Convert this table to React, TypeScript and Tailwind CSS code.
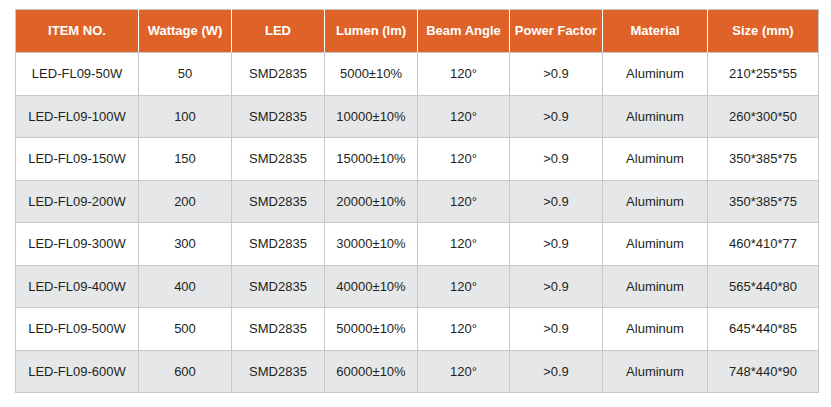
import React from 'react';

const headers = ['ITEM NO.', 'Wattage (W)', 'LED', 'Lumen (lm)', 'Beam Angle', 'Power Factor', 'Material', 'Size (mm)'];
const widths = ['w-[123px]', 'w-[93px]', 'w-[93px]', 'w-[93px]', 'w-[92px]', 'w-[93px]', 'w-[105px]', 'w-[111px]'];

const rows = [
  ['LED-FL09-50W', '50', 'SMD2835', '5000±10%', '120°', '>0.9', 'Aluminum', '210*255*55'],
  ['LED-FL09-100W', '100', 'SMD2835', '10000±10%', '120°', '>0.9', 'Aluminum', '260*300*50'],
  ['LED-FL09-150W', '150', 'SMD2835', '15000±10%', '120°', '>0.9', 'Aluminum', '350*385*75'],
  ['LED-FL09-200W', '200', 'SMD2835', '20000±10%', '120°', '>0.9', 'Aluminum', '350*385*75'],
  ['LED-FL09-300W', '300', 'SMD2835', '30000±10%', '120°', '>0.9', 'Aluminum', '460*410*77'],
  ['LED-FL09-400W', '400', 'SMD2835', '40000±10%', '120°', '>0.9', 'Aluminum', '565*440*80'],
  ['LED-FL09-500W', '500', 'SMD2835', '50000±10%', '120°', '>0.9', 'Aluminum', '645*440*85'],
  ['LED-FL09-600W', '600', 'SMD2835', '60000±10%', '120°', '>0.9', 'Aluminum', '748*440*90'],
];

const App: React.FC = () => {
  return (
    <div className="w-[831px] h-[407px] bg-white pt-[9px] pl-[15px]" style={{ fontFamily: '"Liberation Sans", Arial, sans-serif' }}>
      <table className="border-collapse table-fixed w-[803px] text-[13px] text-[#231f20]">
        <thead>
          <tr className="h-[43px] bg-[#df6329]">
            {headers.map((h, i) => (
              <th
                key={h}
                className={`${widths[i]} font-bold text-white text-center p-0 border border-[#c8c8c8] border-l-white border-r-white first:border-l-[#c8c8c8] last:border-r-[#c8c8c8] border-b-[#c8c8c8] whitespace-nowrap`}
              >
                {h}
              </th>
            ))}
          </tr>
        </thead>
        <tbody>
          {rows.map((r, ri) => (
            <tr key={r[0]} className={`h-[42.5px] ${ri % 2 === 1 ? 'bg-[#e6e7e8]' : 'bg-white'}`}>
              {r.map((c, ci) => (
                <td key={ci} className="text-center p-0 border border-[#c8c8c8] whitespace-nowrap">
                  {c}
                </td>
              ))}
            </tr>
          ))}
        </tbody>
      </table>
    </div>
  );
};

export default App;
